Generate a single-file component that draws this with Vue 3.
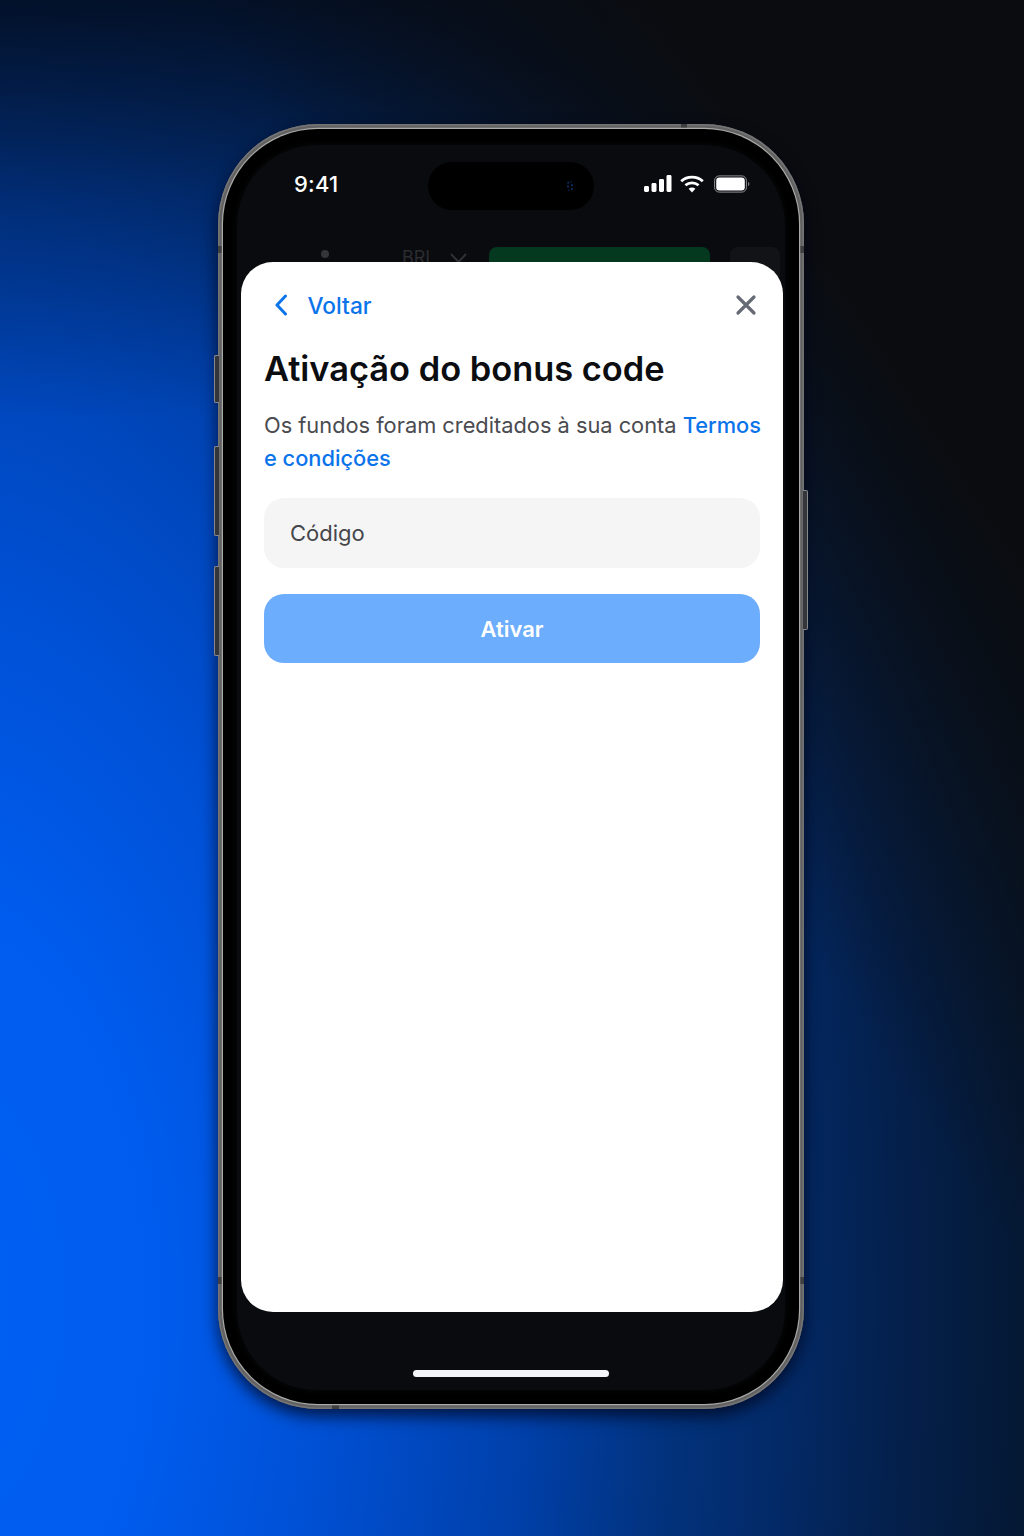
<script setup>
const title = 'Ativação do bonus code'
</script>

<template>
  <div class="page">
    <div class="phone">
      <span class="side side-mute"></span>
      <span class="side side-up"></span>
      <span class="side side-down"></span>
      <span class="side side-power"></span>
      <span class="band band-lt"></span>
      <span class="band band-lb"></span>
      <span class="band band-rt"></span>
      <span class="band band-rb"></span>
      <span class="band band-top"></span>
      <span class="band band-bottom"></span>
      <div class="bezel">
        <div class="screen">
          <div class="status">
            <span class="time">9:41</span>
            <div class="island"><span class="lens"></span></div>
            <div class="status-icons">
              <svg class="signal" width="28" height="18" viewBox="0 0 28 18" fill="#fff">
                <rect x="0" y="11" width="5" height="6" rx="1.4" />
                <rect x="7.5" y="8" width="5" height="9" rx="1.4" />
                <rect x="15" y="4" width="5" height="13" rx="1.4" />
                <rect x="22.5" y="0" width="5" height="17" rx="1.4" />
              </svg>
              <svg class="wifi" width="24" height="18" viewBox="0 0 24 18" fill="none">
                <path d="M1.2 6.200C7.200 .8 16.800 .8 22.800 6.200" stroke="#fff" stroke-width="2.800" />
                <path d="M5.400 10.200C9.200 7 14.800 7 18.600 10.200" stroke="#fff" stroke-width="2.800" />
                <path d="M12 17.600 8.600 13.700C10.500 12.200 13.500 12.200 15.400 13.700Z" fill="#fff" />
              </svg>
              <svg class="battery" width="36" height="18" viewBox="0 0 36 18" fill="none">
                <rect x="0.6" y="0.9" width="31.8" height="16.2" rx="4.6" stroke="#8f9094" stroke-width="1" />
                <rect x="2.2" y="2.5" width="28.6" height="13" rx="3.2" fill="#fff" />
                <path d="M34 7v4c.9-.4 1.400-1.100 1.400-2s-.5-1.600-1.400-2Z" fill="#77787c" />
              </svg>
            </div>
          </div>
          <div class="peek">
            <span class="peek-dot"></span>
            <span class="peek-code">BRL</span>
            <svg class="peek-chev" width="17" height="10" viewBox="0 0 17 10" fill="none">
              <path d="M1 1l7.500 8L16 1" stroke="#2f3136" stroke-width="2" />
            </svg>
            <span class="peek-green"></span>
            <span class="peek-box"></span>
          </div>
          <section class="sheet">
            <header class="nav">
              <div class="back">
                <svg width="14" height="22" viewBox="0 0 14 22" fill="none">
                  <path d="M11.500 2 3 11l8.500 9" stroke="#0b74ea" stroke-width="3" stroke-linecap="round" stroke-linejoin="round" />
                </svg>
                <span>Voltar</span>
              </div>
              <svg class="close" width="22" height="22" viewBox="0 0 22 22" fill="none">
                <path d="M3 3l16 16M19 3 3 19" stroke="#666a75" stroke-width="3.200" stroke-linecap="round" />
              </svg>
            </header>
            <h1>{{ title }}</h1>
            <p class="desc">Os fundos foram creditados à sua conta <a>Termos</a> <a>e condições</a></p>
            <div class="field">Código</div>
            <button class="submit" type="button">Ativar</button>
          </section>
          <div class="home-area"><span class="home"></span></div>
        </div>
      </div>
    </div>
  </div>
</template>

<style>
html, body { margin: 0; background: #0a0c10; }
</style>

<style scoped>
.page {
  box-sizing: border-box;
  width: 1024px;
  height: 1536px;
  overflow: hidden;
  padding: 124px 0 0 218px;
  font-family: Inter, "Noto Sans", sans-serif;
  background:
    linear-gradient(57deg, rgba(10, 12, 16, 0) 59%, #0a0c10 82%),
    linear-gradient(180deg, rgba(3, 11, 26, .85) 0, rgba(3, 11, 26, .35) 200px, rgba(3, 11, 26, 0) 420px),
    radial-gradient(ellipse 1330px 2470px at -60px 1300px,
      #0060f5 0%, #005cee 16%, #0050d4 29%, #0040aa 44%, #02327c 55%, #032a68 63%, #04204c 72%, #05162c 85%, #0a0c10 100%);
}
.phone {
  position: relative;
  box-sizing: border-box;
  width: 586px;
  height: 1285px;
  padding: 5px;
  border-radius: 100px;
  background: #626263;
  box-shadow: 0 7px 16px rgba(0, 4, 24, .75), inset 0 0 0 1.500px #747475;
}
.side {
  position: absolute;
  left: -4px;
  box-sizing: border-box;
  width: 5px;
  border: 1px solid #85878a;
  border-right: 0;
  border-radius: 2px 0 0 2px;
  background: #34363b;
}
.side-mute { top: 231px; height: 48px; }
.side-up { top: 322px; height: 90px; }
.side-down { top: 442px; height: 90px; }
.side-power {
  left: auto;
  right: -4px;
  top: 366px;
  height: 140px;
  border: 1px solid #85878a;
  border-left: 0;
  border-radius: 0 2px 2px 0;
}
.band {
  position: absolute;
  background: #3f3f41;
}
.band-lt, .band-lb, .band-rt, .band-rb { width: 6px; height: 7px; }
.band-lt { left: 0; top: 122px; }
.band-lb { left: 0; top: 1153px; }
.band-rt { right: 0; top: 122px; }
.band-rb { right: 0; top: 1153px; }
.band-top { left: 463px; top: 0; width: 6px; height: 6px; }
.band-bottom { left: 114px; bottom: 0; width: 7px; height: 6px; }
.bezel {
  position: relative;
  box-sizing: border-box;
  height: 100%;
  padding: 16px 14px 14px;
  border-radius: 95px;
  background: #000;
  box-shadow: 0 0 0 1.200px #a9a9a6;
}
.screen {
  display: flex;
  flex-direction: column;
  height: 100%;
  overflow: hidden;
  border-radius: 80px;
  background: #0a0b0e;
  box-shadow: 0 0 6px 1px #07080a;
}
.status {
  display: flex;
  align-items: center;
  height: 78px;
  padding: 0 35px 0 57px;
  color: #fff;
}
.time {
  width: 134px;
  font-size: 22px;
  font-weight: 500;
  letter-spacing: .2px;
}
.island {
  display: flex;
  align-items: center;
  justify-content: flex-end;
  box-sizing: border-box;
  width: 166px;
  height: 48px;
  margin-top: 4px;
  padding-right: 21px;
  border-radius: 24px;
  background: #000;
}
.lens {
  width: 6px;
  height: 10px;
  border-left: 2px dotted #0b2a60;
  border-right: 2px dotted #0b2a60;
  border-radius: 3px;
  box-sizing: border-box;
}
.status-icons {
  display: flex;
  align-items: center;
  gap: 8px;
  margin-left: 50px;
}
.wifi { margin-right: 2px; }
.peek {
  display: flex;
  height: 39px;
  align-items: flex-start;
  margin-bottom: -24px;
  padding: 24px 0 0;
}
.peek-dot {
  width: 8px;
  height: 8px;
  margin: 3px 0 0 84px;
  border-radius: 50%;
  background: #34353a;
}
.peek-code {
  margin: 1px 0 0 73px;
  font-size: 18px;
  line-height: 20px;
  color: #2a2c31;
}
.peek-chev { margin: 6px 0 0 14px; }
.peek-green {
  width: 221px;
  height: 30px;
  margin-left: 22px;
  border-radius: 8px 8px 0 0;
  background: #04391f;
}
.peek-box {
  width: 50px;
  height: 30px;
  margin-left: 20px;
  border-radius: 8px 8px 0 0;
  background: #121317;
}
.sheet {
  position: relative;
  box-sizing: border-box;
  height: 1050px;
  margin: 0 2px 0 4px;
  padding: 31px 23px 0;
  border-radius: 32px;
  background: #fff;
}
.nav {
  display: flex;
  align-items: center;
  justify-content: space-between;
  height: 24px;
  padding: 0 3px 0 10px;
}
.back {
  display: flex;
  align-items: center;
  gap: 19.500px;
  font-size: 22.700px;
  font-weight: 500;
  color: #0b74ea;
}
.close { display: block; }
h1 {
  margin: 30px 0 0;
  font-size: 34.400px;
  line-height: 44px;
  font-weight: 600;
  color: #0c0d10;
  white-space: nowrap;
}
.desc {
  margin: 18px -6px 0 0;
  font-size: 21.800px;
  line-height: 33px;
  color: #4a4b50;
}
.desc a {
  font-weight: 550;
  color: #0b74ea;
}
.field {
  display: flex;
  align-items: center;
  box-sizing: border-box;
  height: 70px;
  margin: 23px 0 0;
  padding-left: 26px;
  border-radius: 20px;
  background: #f5f5f6;
  font-size: 22px;
  color: #45464a;
}
.submit {
  display: block;
  width: 100%;
  height: 69px;
  margin: 26px 0 0;
  border: 0;
  border-radius: 20px;
  background: #6dadfd;
  font-family: inherit;
  font-size: 22px;
  font-weight: 600;
  color: #fff;
}
.home-area {
  display: flex;
  justify-content: center;
  padding-top: 58px;
}
.home {
  width: 196px;
  height: 7px;
  border-radius: 4px;
  background: #f4f5f7;
}
</style>
